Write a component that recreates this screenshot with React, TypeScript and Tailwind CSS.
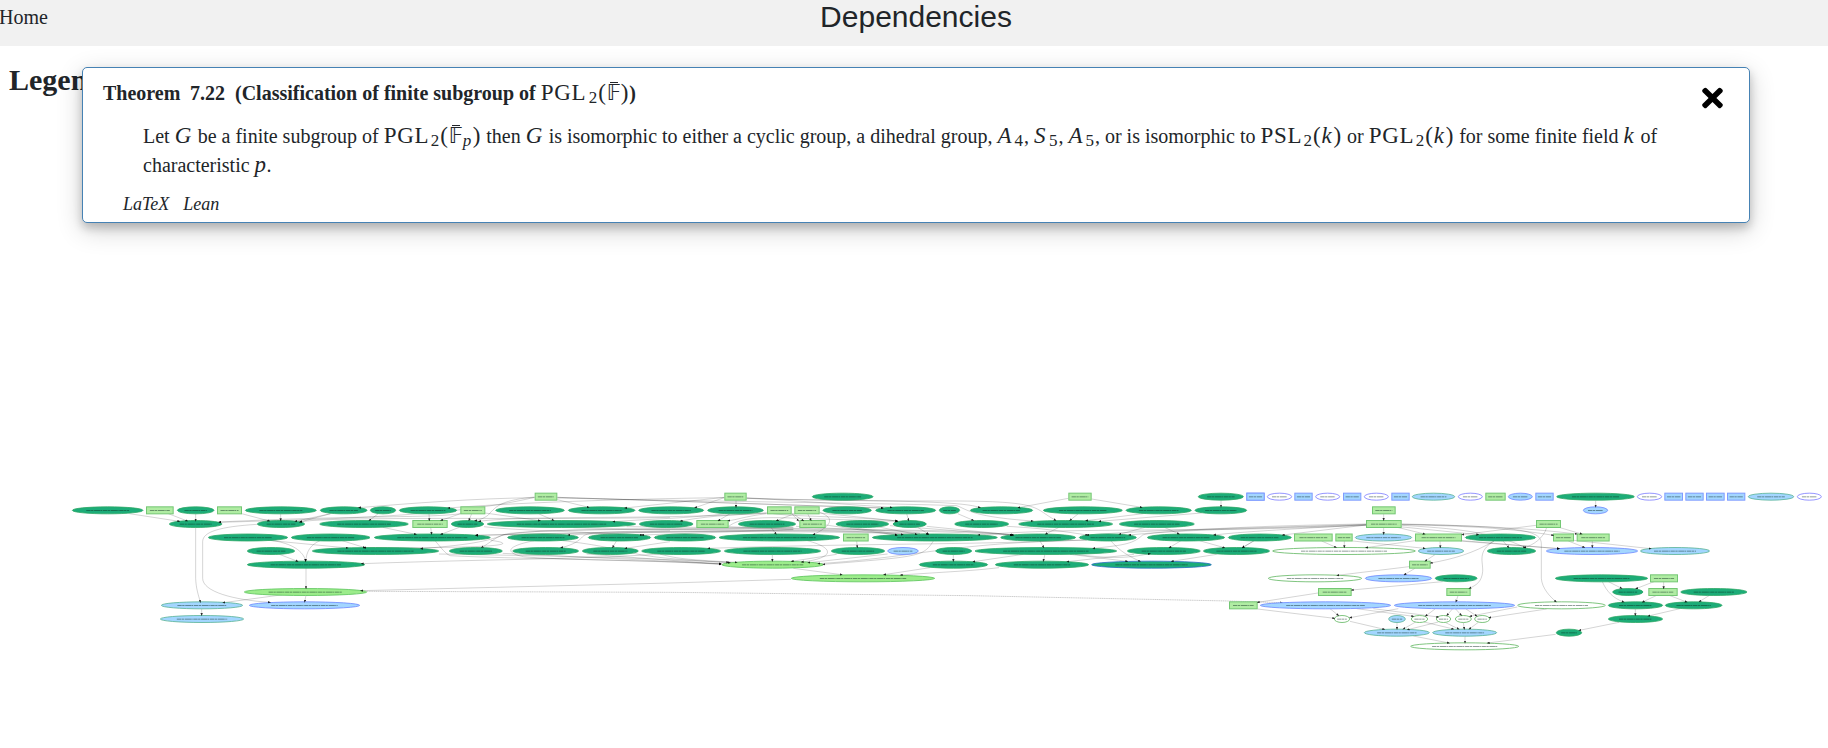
import type { ReactNode } from "react";
import { FaTimes } from "react-icons/fa";

type Kind = "D" | "L" | "B" | "BG" | "W" | "WG" | "R" | "RB" | "DB";
type Node = [Kind, number, number, number];

interface Section {
  dx: number;
  nodes: Node[];
  edges: string[];
}

const ROW_Y = [35, 76, 117, 157.5, 198, 239, 280, 321, 361, 402, 443, 484];

const FILL: Record<Kind, string> = {
  D: "#1cac78",
  DB: "#1cac78",
  L: "#9cec8b",
  B: "#a3d6ff",
  BG: "#a3d6ff",
  W: "#ffffff",
  WG: "#ffffff",
  R: "#b0eca3",
  RB: "#a3d6ff",
};

const STROKE: Record<Kind, string> = {
  D: "#2fa866",
  DB: "#2c6fc4",
  L: "#5cc45c",
  B: "#6c86ff",
  BG: "#58b394",
  W: "#7a7aff",
  WG: "#5fb65f",
  R: "#74c774",
  RB: "#7f9bff",
};

// Node: [kind, row, left, right]; three units make one pixel.
const SECTIONS: Section[] = [
  {
    dx: 180,
    nodes: [
      ["D", 1, 36, 250], ["R", 1, 258, 341], ["D", 1, 351, 463], ["R", 1, 471, 546], ["D", 1, 555, 770], ["D", 1, 780, 922],
      ["D", 2, 327, 487], ["D", 2, 591, 735], ["D", 2, 778, 1046],
      ["D", 3, 444, 684], ["D", 3, 693, 931],
      ["D", 4, 561, 705], ["D", 4, 756, 1137],
      ["D", 5, 561, 915],
      ["L", 7, 552, 921],
      ["BG", 8, 303, 549], ["B", 8, 567, 900],
      ["BG", 9, 300, 552],
    ],
    edges: [
      "M208,86 L358,109", "M325,86 L382,108", "M407,86 V107", "M545,86 L628,108", "M662,86 V106", "M812,86 L720,111", "M812,86 L706,109",
      "M1202,86 C1100,100 900,90 478,111", "M1424,37 C1200,90 900,100 478,112", "M1830,97 C1500,106 800,92 720,111",
      "M407,127 V280 C408,310 415,330 421,351",
      "M591,118 C480,125 428,140 428,170 V280 C428,320 520,345 630,352",
      "M632,166 C700,175 730,200 737,228", "M780,167 C750,180 740,200 737,228", "M625,166 L863,189", "M843,166 L915,188", "M658,208 L713,229",
      "M738,249 V310", "M738,331 L734,350", "M670,329 L490,353", "M425,371 V390",
      "M1830,206 C1500,225 1300,222 905,236",
      "M2193,283 L1830,294 L903,317",
    ],
  },
  {
    dx: 1080,
    nodes: [
      ["R", 0, 524, 592],
      ["D", 1, 30, 108], ["D", 1, 117, 291], ["R", 1, 301, 376], ["D", 1, 406, 614], ["D", 1, 624, 826], ["D", 1, 835, 1032],
      ["R", 2, 157, 263], ["D", 2, 273, 372], ["D", 2, 381, 828], ["D", 2, 837, 1000],
      ["D", 3, 42, 392], ["D", 3, 442, 656], ["D", 3, 684, 873], ["D", 3, 882, 1068],
      ["D", 4, 267, 428], ["D", 4, 457, 657], ["D", 4, 666, 836], ["D", 4, 844, 1083],
    ],
    edges: [
      "M524,38 C350,40 150,55 -3,68", "M1093,38 C900,40 500,50 265,69", "M524,36 C430,45 410,60 385,90 C375,98 360,105 345,107",
      "M592,44 L686,67", "M592,37 L1568,69", "M1093,37 L795,69",
      "M55,86 L28,106", "M207,86 L208,106", "M335,86 L327,106", "M302,86 L243,106", "M375,84 L540,107", "M535,86 L581,106",
      "M1220,84 C900,105 500,90 357,109", "M1100,86 C980,100 900,100 760,110",
      "M68,127 L168,148", "M212,127 L215,147", "M298,127 L243,148",
      "M225,167 C245,190 255,205 270,212 C450,222 800,222 1082,237",
      "M1300,126 C900,135 600,130 450,145 C410,150 390,175 365,187",
      "M1300,128 C900,138 560,126 430,150 C390,165 350,178 183,191",
      "M1300,133 C900,145 700,142 348,151", "M1680,145 C1200,128 700,142 348,151",
      "M1680,147 C1200,134 800,140 625,150", "M1300,134 L846,150", "M372,125 C450,135 600,138 846,150",
      "M930,137 C750,140 680,140 668,155 C660,165 640,180 603,188",
      "M770,167 L758,187", "M930,170 L796,190",
      "M523,167 C430,185 440,205 490,215 C600,226 900,226 1082,238",
      "M237,207 C500,212 800,215 1110,233", "M392,166 C460,175 480,190 12,188", "M428,205 L1082,236",
    ],
  },
  {
    dx: 1980,
    nodes: [
      ["R", 0, 193, 260], ["D", 0, 456, 640],
      ["D", 1, 142, 311], ["R", 1, 321, 395], ["R", 1, 403, 479], ["D", 1, 488, 635], ["D", 1, 646, 828], ["D", 1, 837, 900],
      ["R", 2, 109, 206], ["D", 2, 234, 408], ["R", 2, 418, 497], ["D", 2, 527, 687], ["D", 2, 698, 800], ["D", 2, 883, 1047],
      ["D", 3, 176, 540], ["R", 3, 549, 626], ["D", 3, 636, 1013],
      ["D", 4, 192, 483], ["D", 4, 513, 675], ["B", 4, 682, 776], ["D", 4, 826, 936],
      ["L", 5, 185, 491], ["D", 5, 777, 984],
      ["L", 6, 393, 825],
    ],
    edges: [
      "M193,38 L105,68", "M228,46 V66", "M260,38 L695,67", "M-308,37 L668,69", "M260,40 C500,48 800,48 900,48 C1150,50 1120,70 1187,106",
      "M-308,39 C300,52 700,55 890,62 C920,72 930,95 1118,108", "M893,86 L940,106",
      "M210,86 L175,107", "M320,86 C250,95 230,105 205,107", "M443,86 L453,106", "M395,84 L430,107", "M320,84 C250,90 170,88 62,108", "M403,86 L350,107", "M395,86 L415,107",
      "M479,82 C530,100 510,125 460,149", "M340,86 C400,95 600,95 712,108", "M479,84 L712,108", "M740,86 L746,106",
      "M333,127 L348,147", "M497,120 L710,150", "M650,125 L770,148", "M773,127 L805,147", "M570,127 L728,149", "M206,124 C240,98 300,95 420,100 L712,109",
      "M-100,125 C300,130 700,128 805,148", "M206,125 C500,140 700,130 1055,150", "M-260,128 C200,140 600,128 710,150", "M408,124 C600,140 900,130 1060,150",
      "M590,168 L592,187", "M442,167 C530,190 520,220 425,231", "M337,208 V228",
      "M530,208 L395,229", "M683,207 L445,233", "M820,168 C790,215 780,215 490,238", "M1280,165 C850,175 790,215 475,236",
      "M-300,166 C-50,195 -150,215 205,232", "M-220,207 L182,237", "M0,207 C50,222 100,225 230,232",
      "M1280,165 C900,180 600,175 145,190", "M400,250 L545,269", "M810,248 L672,269", "M1017,248 C930,258 900,258 722,270", "M880,208 V228",
    ],
  },
  {
    dx: 2880,
    nodes: [
      ["R", 0, 325, 395], ["D", 0, 714, 851], ["RB", 0, 859, 914],
      ["D", 1, 30, 219], ["D", 1, 249, 488], ["D", 1, 497, 695], ["D", 1, 704, 861],
      ["D", 2, 175, 459], ["D", 2, 477, 704],
      ["D", 3, 121, 348], ["D", 3, 357, 530], ["D", 3, 561, 795], ["D", 3, 804, 995],
      ["D", 4, 44, 471], ["D", 4, 501, 722], ["D", 4, 729, 930],
      ["D", 5, 105, 387], ["DB", 5, 394, 755],
      ["R", 8, 807, 893],
    ],
    edges: [
      "M-640,40 C-300,50 0,44 60,68", "M325,40 L175,68", "M395,42 L545,67", "M783,46 V65",
      "M355,86 L330,106", "M550,86 L378,107", "M725,84 L418,109",
      "M297,127 L257,147", "M555,127 L478,148", "M613,127 L657,147", "M140,124 C250,130 300,138 382,150", "M-100,124 L160,150", "M-210,122 L155,150",
      "M1218,117 C900,122 700,132 507,150", "M1218,118 C900,130 650,130 382,150", "M1218,119 C950,135 850,140 762,150",
      "M1218,120 C700,135 580,140 548,150 C520,175 500,180 400,190", "M1218,121 C700,145 350,125 55,150",
      "M240,168 L251,187", "M453,168 C480,200 510,215 540,229", "M663,167 L628,188", "M718,167 L793,188", "M883,167 L848,187",
      "M190,208 L40,230", "M255,208 L250,228", "M330,208 L502,229", "M345,208 C480,225 520,215 570,206", "M522,208 L322,230", "M770,208 L635,229",
    ],
  },
  {
    dx: 3660,
    nodes: [
      ["RB", 0, 79, 134], ["W", 0, 141, 216], ["RB", 0, 223, 278], ["W", 0, 286, 360], ["RB", 0, 369, 424], ["W", 0, 432, 506], ["RB", 0, 514, 569],
      ["BG", 0, 576, 705], ["W", 0, 714, 788], ["R", 0, 796, 857], ["B", 0, 864, 938],
      ["R", 1, 456, 527], ["R", 2, 438, 545],
      ["R", 3, 222, 338], ["R", 3, 346, 398], ["BG", 3, 405, 576], ["R", 3, 585, 726], ["D", 3, 735, 948],
      ["WG", 4, 157, 587], ["BG", 4, 594, 732], ["D", 4, 801, 948],
      ["R", 5, 567, 632],
      ["WG", 6, 144, 426], ["B", 6, 435, 636], ["D", 6, 645, 772],
      ["R", 7, 294, 395], ["R", 7, 679, 752],
      ["B", 8, 120, 513], ["B", 8, 522, 885], ["WG", 8, 892, 1157],
      ["WG", 9, 342, 390], ["BG", 9, 505, 557], ["WG", 9, 573, 624], ["WG", 9, 648, 693], ["WG", 9, 705, 755], ["WG", 9, 763, 810],
      ["BG", 10, 432, 629], ["BG", 10, 637, 831],
      ["WG", 11, 571, 897],
    ],
    edges: [
      "M491,87 V105", "M491,127 V147", "M438,120 L188,150", "M532,127 L614,147", "M538,125 L775,149",
      "M102,167 L68,188", "M305,168 L348,187", "M373,168 V187", "M585,167 L438,188", "M660,168 L661,187", "M398,168 L614,190",
      "M726,167 L1017,191", "M822,168 C760,205 700,222 632,234", "M822,168 C770,200 790,230 788,260 C785,290 770,300 748,310", "M848,167 L866,187",
      "M545,121 C700,130 820,140 915,188",
      "M645,209 L616,228", "M567,245 L352,271", "M585,250 L553,269", "M668,290 L395,315", "M294,324 L113,352", "M714,332 L708,350",
      "M113,372 L343,400", "M330,371 L355,391", "M410,371 L580,394", "M535,371 L390,398", "M645,372 L617,393", "M697,372 L681,391",
      "M707,372 L724,391", "M738,372 L770,393", "M892,366 L750,394", "M980,372 L808,398",
      "M390,409 L493,433", "M531,413 V432", "M587,411 L550,432", "M655,411 L563,434", "M612,411 L700,432", "M677,413 L716,432",
      "M730,413 L733,432", "M775,412 L748,432", "M460,371 L655,396", "M580,453 L687,474", "M735,453 V473", "M1007,448 L803,474",
    ],
  },
  {
    dx: 4560,
    nodes: [
      ["RB", 0, 46, 101], ["D", 0, 109, 344], ["W", 0, 351, 426], ["RB", 0, 433, 489], ["RB", 0, 496, 551], ["RB", 0, 558, 614], ["RB", 0, 621, 676],
      ["BG", 0, 684, 822], ["W", 0, 831, 905],
      ["B", 1, 189, 264], ["R", 2, 48, 123], ["R", 3, 99, 162], ["R", 3, 170, 269],
      ["B", 4, 78, 354], ["BG", 4, 360, 570],
      ["D", 6, 105, 384], ["R", 6, 390, 474],
      ["D", 7, 277, 370], ["R", 7, 385, 473], ["D", 7, 481, 682],
      ["D", 8, 264, 429], ["D", 8, 435, 607], ["D", 9, 264, 429], ["D", 10, 108, 186],
    ],
    edges: [
      "M227,46 V65", "M48,121 L-173,149", "M80,128 C70,160 40,180 13,188", "M120,128 L185,147",
      "M-355,119 C-100,124 0,135 100,151", "M-355,118 C-100,122 50,132 170,147",
      "M-355,117 C40,125 64,140 64,180 V280 C66,310 90,335 108,350",
      "M145,168 L193,187", "M217,168 V187", "M-180,168 L117,191", "M162,166 L392,191",
      "M265,290 L305,310", "M247,290 C260,320 280,340 311,351", "M402,290 L348,311", "M431,290 V310",
      "M408,332 L368,351", "M450,332 L500,351", "M567,332 L538,350", "M346,372 V391", "M480,371 L385,393", "M297,412 L178,436",
    ],
  },
];

function GraphNode({ node }: { node: Node }) {
  const [kind, row, x1, x2] = node;
  const cy = ROW_Y[row];
  const w = x2 - x1;
  const box = kind === "R" || kind === "RB";
  const label = w * (box ? 0.72 : 0.6);
  return (
    <g>
      {box ? (
        <rect x={x1 + 1.5} y={cy - 10.5} width={w - 3} height={21} fill={FILL[kind]} stroke={STROKE[kind]} strokeWidth={3} />
      ) : (
        <ellipse cx={(x1 + x2) / 2} cy={cy} rx={w / 2 - 1} ry={10.5} fill={FILL[kind]} stroke={STROKE[kind]} strokeWidth={2.4} />
      )}
      <line
        x1={(x1 + x2 - label) / 2}
        x2={(x1 + x2 + label) / 2}
        y1={cy + 0.5}
        y2={cy + 0.5}
        stroke="#0b2a20"
        strokeOpacity={0.62}
        strokeWidth={2.2}
        strokeDasharray="13 1.5 7 2 19 1 4 2"
      />
    </g>
  );
}

function DependencyGraph() {
  return (
    <svg className="block h-[190px] w-[1828px]" viewBox="0 0 5484 570">
      <defs>
        <marker id="arrow" markerUnits="userSpaceOnUse" markerWidth="9" markerHeight="8" refX="6" refY="4" orient="auto">
          <path d="M0,0.5 L9,4 L0,7.5 Z" fill="#000" fillOpacity={0.8} />
        </marker>
      </defs>
      {SECTIONS.map((s) => (
        <g key={s.dx} transform={`translate(${s.dx} 0)`}>
          {s.edges.map((d) => (
            <path key={d} d={d} fill="none" stroke="#000" strokeOpacity={0.3} strokeWidth={1.7} />
          ))}
        </g>
      ))}
      <path
        d="M1100,319 L2010,322 L2910,332 L3687,348 L3846,353"
        fill="none"
        stroke="#000"
        strokeOpacity={0.3}
        strokeWidth={2}
        strokeDasharray="4 1.5"
        markerEnd="url(#arrow)"
      />
      {SECTIONS.map((s) => (
        <g key={s.dx} transform={`translate(${s.dx} 0)`}>
          {s.nodes.map((n) => (
            <GraphNode key={n.join()} node={n} />
          ))}
        </g>
      ))}
      {SECTIONS.map((s) => (
        <g key={s.dx} transform={`translate(${s.dx} 0)`}>
          {s.edges.map((d) => (
            <path key={d} d={d} fill="none" stroke="none" markerEnd="url(#arrow)" />
          ))}
        </g>
      ))}
    </svg>
  );
}

function Up({ children, className }: { children: ReactNode; className: string }) {
  return <span className={`inline-block text-[23px] leading-none font-normal tracking-[0.7px] ${className}`}>{children}</span>;
}

function Var({ children, className }: { children: ReactNode; className: string }) {
  return <span className={`inline-block text-[23px] leading-none italic ${className}`}>{children}</span>;
}

function Sub({ children, className = "w-[9.5px]" }: { children: ReactNode; className?: string }) {
  return <span className={`relative top-[3px] inline-block text-[17px] leading-none font-normal ${className}`}>{children}</span>;
}

function Paren({ children }: { children: ReactNode }) {
  return <span className="inline-block w-[8.5px] text-[23px] leading-none font-normal">{children}</span>;
}

function FieldBar() {
  return (
    <span className="relative inline-block w-[14px] leading-none font-normal">
      <span className="font-['DejaVu_Sans'] text-[21px] leading-none">𝔽</span>
      <span className="absolute top-[-1px] left-[3px] h-px w-[8px] bg-[#212529]" />
    </span>
  );
}

export default function App() {
  return (
    <div className="relative h-[748px] w-[1828px] overflow-hidden bg-white font-['Liberation_Serif',serif] text-[20px] text-[#212529]">
      <header className="flex h-[46px] bg-[#f1f1f1]">
        <nav className="-ml-px w-px pt-[2px] leading-[30px]">Home</nav>
        <h1 className="flex-1 pl-[4px] text-center font-['Liberation_Sans',sans-serif] text-[30px] leading-[34px]">Dependencies</h1>
      </header>
      <main className="flex h-[702px] flex-col">
        <h2 className="h-[439px] pt-[16px] pl-[9px] text-[30px] leading-[36px] font-bold">Legend</h2>
        <DependencyGraph />
      </main>

      <section className="absolute top-[67px] left-[82px] h-[156px] w-[1668px] rounded-[5px] border border-[#4682b4] bg-white shadow-[0_5px_10px_0_rgba(0,0,0,0.2),0_7px_26px_0_rgba(0,0,0,0.19)]">
        <div className="flex h-[52px] justify-between pr-[26px] pl-[20px]">
          <h3 className="flex pt-[10px] leading-[30px] font-bold whitespace-pre">
            <span className="w-[87px]">Theorem</span>
            <span className="w-[45px]">7.22</span>
            <span>
              {"(Classification of finite subgroup of "}
              <Up className="w-[48px]">PGL</Up>
              <Sub>2</Sub>
              <Paren>(</Paren>
              <FieldBar />
              <Paren>)</Paren>)
            </span>
          </h3>
          <button className="flex w-[21px] items-start pt-[15px] text-black" aria-label="Close">
            <FaTimes className="h-[30px] w-[21px]" />
          </button>
        </div>
        <p className="mt-[2px] pl-[60px] leading-[29px]">
          Let <Var className="w-[18px]">G</Var> be a finite subgroup of <Up className="w-[47px]">PGL</Up>
          <Sub>2</Sub>
          <Paren>(</Paren>
          <FieldBar />
          <Sub className="w-[10px] italic">p</Sub>
          <Paren>)</Paren> then <Var className="w-[18px]">G</Var> is isomorphic to either a cyclic group, a dihedral group,{" "}
          <Var className="w-[17px]">A</Var>
          <Sub>4</Sub>, <Var className="w-[15px]">S</Var>
          <Sub>5</Sub>, <Var className="w-[17px]">A</Var>
          <Sub>5</Sub>, or is isomorphic to <Up className="w-[43px]">PSL</Up>
          <Sub>2</Sub>
          <Paren>(</Paren>
          <Var className="w-[12px]">k</Var>
          <Paren>)</Paren> or <Up className="w-[47px]">PGL</Up>
          <Sub>2</Sub>
          <Paren>(</Paren>
          <Var className="w-[12px]">k</Var>
          <Paren>)</Paren> for some finite field <Var className="w-[12px]">k</Var> of
          <br />
          {"characteristic "}
          <Var className="w-[12px]">p</Var>.
        </p>
        <div className="flex gap-[14px] pt-[11px] pl-[40px] text-[18px] leading-[27px] italic">
          <span>LaTeX</span>
          <span>Lean</span>
        </div>
      </section>
    </div>
  );
}
